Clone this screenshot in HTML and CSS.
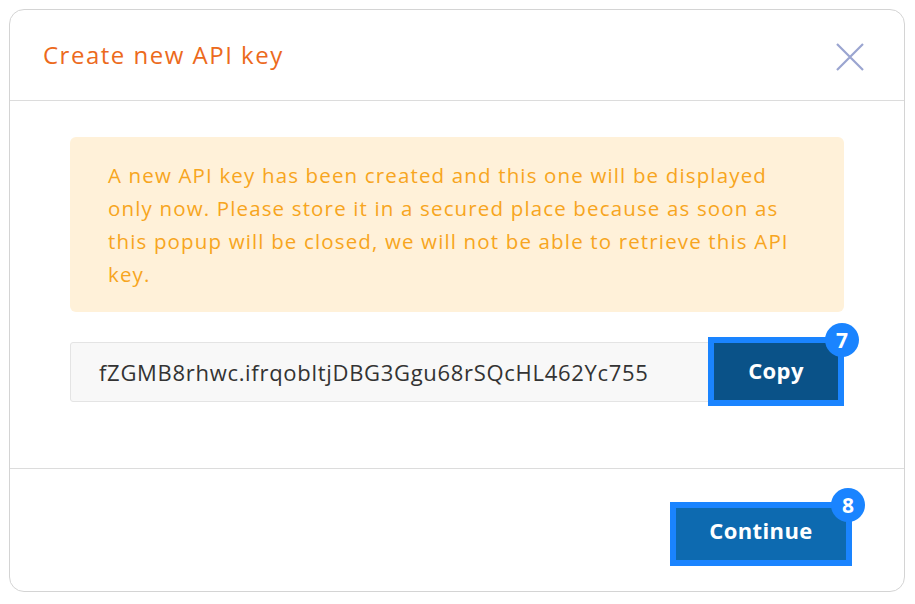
FILE: index.html
```html
<!DOCTYPE html>
<html>
<head>
<meta charset="utf-8">
<link rel="stylesheet" href="styles.css">
</head>
<body>
<div class="dialog">
  <div class="dialog-header">
    <h2 class="title">Create new API key</h2>
    <button class="close" aria-label="Close">
      <svg width="28" height="28" viewBox="0 0 28 28"><path d="M1 1 L27 27 M27 1 L1 27" stroke="#9aa5d0" stroke-width="2.2" fill="none"/></svg>
    </button>
  </div>
  <div class="dialog-body">
    <div class="alert">A new API key has been created and this one will be displayed only now. Please store it in a secured place because as soon as this popup will be closed, we will not be able to retrieve this API key.</div>
    <div class="key-row">
      <div class="key-input">fZGMB8rhwc.ifrqobltjDBG3Ggu68rSQcHL462Yc755</div>
      <button class="btn btn-copy">Copy<span class="badge badge-copy">7</span></button>
    </div>
  </div>
  <div class="dialog-footer">
    <button class="btn btn-continue">Continue<span class="badge badge-continue">8</span></button>
  </div>
</div>
</body>
</html>
```

FILE: styles.css
```css
* { box-sizing: border-box; }
html, body { margin: 0; padding: 0; background: #fff; }
body {
  padding: 9px 9px 0 9px;
  font-family: "Open Sans", "Liberation Sans", sans-serif;
}
.dialog {
  width: 896px;
  height: 583px;
  border: 1px solid #d4d4d4;
  border-radius: 15px;
  display: flex;
  flex-direction: column;
  background: #fff;
}
.dialog-header {
  height: 91px;
  border-bottom: 1px solid #dcdcdc;
  display: flex;
  align-items: center;
  justify-content: space-between;
  padding: 0 40px 0 33px;
}
.title {
  margin: 0;
  font-weight: 400;
  font-size: 24px;
  letter-spacing: 1.5px;
  color: #ec6a1c;
  position: relative;
  top: -1px;
}
.close {
  border: 0;
  background: none;
  padding: 0;
  width: 28px;
  height: 28px;
  display: flex;
  position: relative;
  top: 2px;
}
.dialog-body {
  padding: 36px 60px 0 60px;
  height: 368px;
  border-bottom: 1px solid #dcdcdc;
}
.alert {
  background: #fff1d9;
  border-radius: 6px;
  color: #f7a520;
  font-size: 20.5px;
  line-height: 33px;
  padding: 22px 40px 21px 38px;
  height: 175px;
  letter-spacing: 1.15px;
}
.key-row {
  margin-top: 25px;
  display: flex;
  align-items: center;
}
.key-input {
  flex: 1;
  height: 60px;
  background: #f8f8f8;
  border: 1px solid #e4e4e4;
  border-radius: 3px;
  margin-right: -3px;
  display: flex;
  align-items: center;
  padding-left: 28px;
  font-size: 22px;
  color: #333;
  letter-spacing: 0.7px;
}
.btn {
  position: relative;
  border: 6px solid #1a84ff;
  color: #fff;
  font-family: "Open Sans", "Liberation Sans", sans-serif;
  font-weight: 700;
  font-size: 22px;
  letter-spacing: 0.4px;
  padding: 0 0 4px 0;
  display: flex;
  align-items: center;
  justify-content: center;
}
.btn-copy {
  width: 136px;
  height: 69px;
  background: #0a5288;
}
.dialog-footer {
  flex: 1;
  display: flex;
  align-items: center;
  justify-content: flex-end;
  padding-right: 52px;
  padding-top: 8px;
}
.btn-continue {
  width: 182px;
  height: 64px;
  background: #0d6ab0;
  padding-bottom: 8px;
}
.badge {
  position: absolute;
  width: 34px;
  height: 34px;
  border-radius: 50%;
  background: #1a84ff;
  color: #fff;
  font-size: 21px;
  font-weight: 700;
  letter-spacing: 0;
  display: flex;
  align-items: center;
  justify-content: center;
  top: -20px;
}
.badge-copy { right: -21px; }
.badge-continue { right: -19px; }
```
